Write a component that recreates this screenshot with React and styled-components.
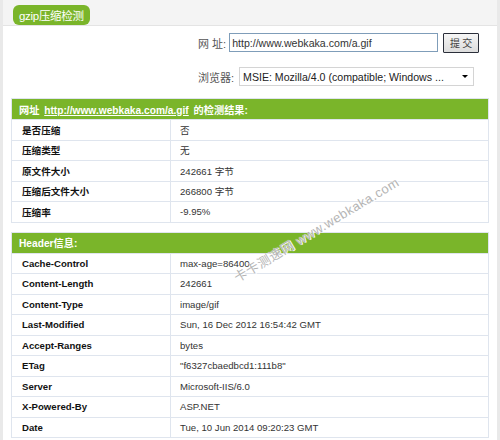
import React from 'react'
import styled, { createGlobalStyle } from 'styled-components'

const GlobalStyle = createGlobalStyle`
  body {
    margin: 0;
    background: #fff;
    font-family: "Liberation Sans", "Noto Sans CJK SC", sans-serif;
  }
`

const compress = [
  ['是否压缩', '否'],
  ['压缩类型', '无'],
  ['原文件大小', '242661 字节'],
  ['压缩后文件大小', '266800 字节'],
  ['压缩率', '-9.95%'],
]

const headers = [
  ['Cache-Control', 'max-age=86400'],
  ['Content-Length', '242661'],
  ['Content-Type', 'image/gif'],
  ['Last-Modified', 'Sun, 16 Dec 2012 16:54:42 GMT'],
  ['Accept-Ranges', 'bytes'],
  ['ETag', '"f6327cbaedbcd1:111b8"'],
  ['Server', 'Microsoft-IIS/6.0'],
  ['X-Powered-By', 'ASP.NET'],
  ['Date', 'Tue, 10 Jun 2014 09:20:23 GMT'],
]

function ResultTable({ title, rows }) {
  return (
    <Table>
      <colgroup>
        <Col $w={159} />
        <Col />
      </colgroup>
      <thead>
        <tr>
          <Th colSpan={2}>{title}</Th>
        </tr>
      </thead>
      <tbody>
        {rows.map(([k, v]) => (
          <tr key={k}>
            <Key>{k}</Key>
            <Val>{v}</Val>
          </tr>
        ))}
      </tbody>
    </Table>
  )
}

export default function App() {
  return (
    <>
      <GlobalStyle />
      <Page>
        <TopBar>
          <Tab>gzip压缩检测</Tab>
        </TopBar>
        <Body>
          <Form>
            <FormRow>
              <Label>网 址:</Label>
              <UrlInput defaultValue="http://www.webkaka.com/a.gif" />
              <Submit type="button">提 交</Submit>
            </FormRow>
            <FormRow>
              <Label>浏览器:</Label>
              <SelectWrap>
                <Select defaultValue="msie">
                  <option value="msie">MSIE: Mozilla/4.0 (compatible; Windows ...</option>
                </Select>
                <Arrow />
              </SelectWrap>
            </FormRow>
          </Form>

          <ResultTable
            title={
              <>
                网址 <HeadLink href="#">http://www.webkaka.com/a.gif</HeadLink> 的检测结果:
              </>
            }
            rows={compress}
          />
          <ResultTable title="Header信息:" rows={headers} />
        </Body>
        <Watermark>卡卡测速网 www.webkaka.com</Watermark>
      </Page>
    </>
  )
}

const Page = styled.div`
  position: relative;
  width: 500px;
  height: 440px;
  box-sizing: border-box;
  overflow: hidden;
  background: #fff;
  border-left: 3px solid #e9e9e9;
  border-right: 3px solid #e9e9e9;
`

const TopBar = styled.div`
  height: 26px;
  box-sizing: border-box;
  padding: 5px 0 0 10px;
  background: #f4f4f4;
  border-bottom: 1px solid #e4e4e4;
`

const Tab = styled.div`
  display: inline-flex;
  align-items: center;
  height: 20px;
  padding: 0 6px;
  box-sizing: border-box;
  border-radius: 6px;
  background: #7ab52a;
  color: #fff;
  font-size: 11.5px;
  letter-spacing: -0.3px;
`

const Body = styled.div`
  padding: 7px 8px 0 8px;
`

const Form = styled.div`
  display: flex;
  flex-direction: column;
  gap: 15px;
  padding-left: 187px;
  margin-bottom: 12px;
`

const FormRow = styled.div`
  display: flex;
  align-items: center;
  gap: 3px;
  height: 19px;
`

const Label = styled.span`
  font-size: 11px;
  color: #555;
`

const UrlInput = styled.input`
  width: 209px;
  height: 19px;
  box-sizing: border-box;
  border: 1px solid #7f9db9;
  padding: 0 2px;
  font-family: "Liberation Sans", sans-serif;
  font-size: 10.6px;
  color: #333;
  outline: none;
`

const Submit = styled.button`
  margin-left: 2px;
  width: 36px;
  height: 20px;
  box-sizing: border-box;
  border: 1px solid #2b2f3a;
  border-radius: 1px;
  background: linear-gradient(#f6f6f6, #dcdcdc);
  font-family: "Noto Sans CJK SC", sans-serif;
  font-size: 10px;
  color: #444;
  padding: 0;
`

const SelectWrap = styled.div`
  position: relative;
  margin-left: 2px;
`

const Select = styled.select`
  appearance: none;
  width: 235px;
  height: 19px;
  box-sizing: border-box;
  border: 1px solid #d4d4d4;
  background: #fff;
  padding: 0 3px;
  font-family: "Liberation Sans", sans-serif;
  font-size: 10.6px;
  color: #222;
  outline: none;
`

const Arrow = styled.span`
  position: absolute;
  right: 6px;
  top: 8px;
  width: 0;
  height: 0;
  border-left: 3px solid transparent;
  border-right: 3px solid transparent;
  border-top: 3px solid #000;
`

const Table = styled.table`
  width: 478px;
  border-collapse: collapse;
  border: 1px solid #dfe5ee;
  margin-bottom: 9px;
  table-layout: fixed;
  font-size: 9.6px;
`

const Col = styled.col`
  width: ${(p) => (p.$w ? `${p.$w}px` : 'auto')};
`

const Th = styled.th`
  height: 20px;
  padding: 0 0 0 7px;
  background: #7ab52a;
  color: #fff;
  text-align: left;
  font-size: 10.2px;
  font-weight: bold;
`

const HeadLink = styled.a`
  color: #fff;
  text-decoration: underline;
  margin: 0 2px;
`

const Key = styled.td`
  height: 19.5px;
  padding: 0 0 0 10px;
  border: 1px solid #dfe5ee;
  font-weight: bold;
  color: #111;
`

const Val = styled.td`
  height: 19.5px;
  padding: 0 0 0 9px;
  border: 1px solid #dfe5ee;
  color: #333;
`

const Watermark = styled.span`
  position: absolute;
  left: 313px;
  top: 229px;
  transform: translate(-50%, -50%) rotate(-31deg);
  white-space: nowrap;
  font-size: 13px;
  color: #b4b4b4;
  letter-spacing: 0.5px;
  text-shadow: 0 0 1px #fff, 1px 1px 0 #fff;
  pointer-events: none;
`
